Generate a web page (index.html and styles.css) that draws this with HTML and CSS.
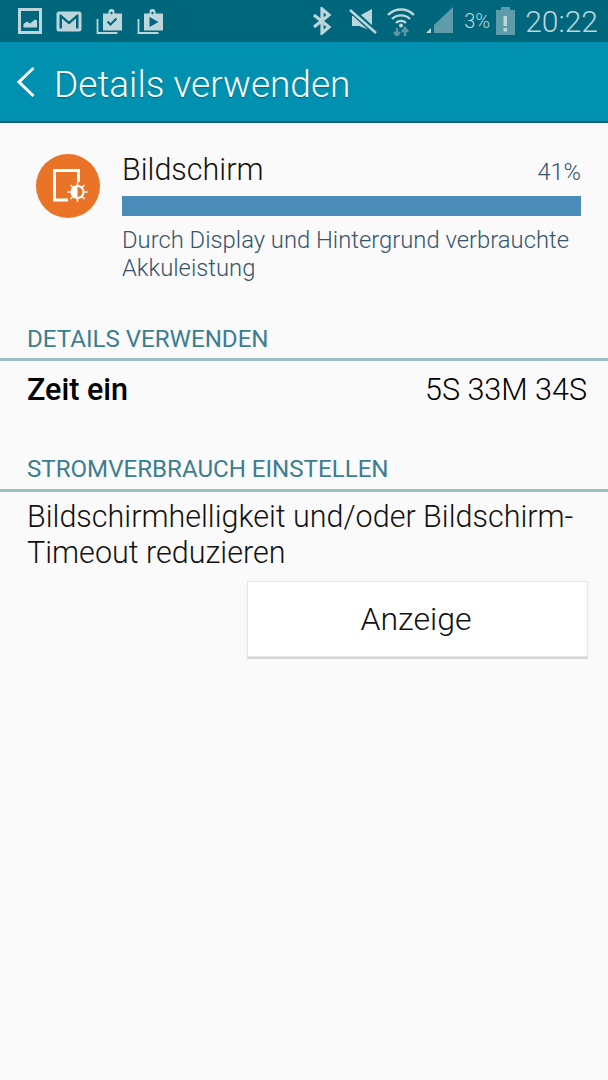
FILE: index.html
```html
<!DOCTYPE html>
<html lang="de">
<head>
<meta charset="utf-8">
<title>Details verwenden</title>
<link rel="stylesheet" href="styles.css">
</head>
<body>
<div class="statusbar">
  <div class="notif">
    <svg class="ic" width="24" height="26" viewBox="0 0 24 26"><rect x="0" y="0" width="24" height="26" fill="#bcd6dc"/><rect x="3" y="3" width="18" height="20" fill="#00667c"/><path d="M5.500 19.500V16L9 13.500l3 2 5-4 2 .8v7.200z" fill="#bcd6dc"/></svg>
    <svg class="ic" width="26" height="21" viewBox="0 0 26 21"><rect x="0.500" y="0.500" width="25" height="20" rx="2.500" fill="#bcd6dc"/><path d="M3.500 17.500V3.500h1.500L13 10.500 21 3.500h1.500v14h-2.500V7.500L13 13.500 6 7.500v10z" fill="#00667c"/></svg>
    <svg class="ic" width="27" height="25" viewBox="0 0 27 25"><path d="M7 4.500h5.500V3a3 3 0 0 1 6 0v1.500H26v17H7z" fill="#bcd6dc"/><path d="M1.500 10v14h20" fill="none" stroke="#bcd6dc" stroke-width="1.800"/><circle cx="15.500" cy="4" r="1.200" fill="#00667c"/><path d="M11.500 12.500l3 3 6-6" fill="none" stroke="#00667c" stroke-width="2"/></svg>
    <svg class="ic" width="27" height="25" viewBox="0 0 27 25"><path d="M7 4.500h5.500V3a3 3 0 0 1 6 0v1.500H26v17H7z" fill="#bcd6dc"/><path d="M1.500 10v14h20" fill="none" stroke="#bcd6dc" stroke-width="1.800"/><circle cx="15.500" cy="4" r="1.200" fill="#00667c"/><path d="M12.500 8l9 5-9 5z" fill="#00667c"/></svg>
  </div>
  <div class="sys">
    <svg class="bt" width="20" height="28" viewBox="0 0 20 28"><path d="M2 8l15 12-7 6V2l7 6L2 20" fill="none" stroke="#bcd6dc" stroke-width="3.200"/></svg>
    <svg class="mute" width="28" height="26" viewBox="0 0 28 26"><path d="M3 8h7L23 1v22L10 18H3z" fill="#bcd6dc"/><path d="M1 1l26 24" stroke="#00667c" stroke-width="6"/><path d="M1 2l26 23" stroke="#bcd6dc" stroke-width="2.500"/></svg>
    <svg class="wifi" width="30" height="30" viewBox="0 0 30 30"><path d="M2 9a18 18 0 0 1 26 0M6 13a13 13 0 0 1 18 0M10 17a7 7 0 0 1 10 0" fill="none" stroke="#bcd6dc" stroke-width="2.400"/><circle cx="15" cy="19.500" r="2" fill="#bcd6dc"/><path d="M11 22v8M8 26l3 4 3-4M19 30v-8M16 26l3-4 3 4" fill="none" stroke="#5f95a3" stroke-width="2.400"/></svg>
    <svg class="signal" width="28" height="28" viewBox="0 0 28 28"><path d="M8 26V18L27 0v26z" fill="#5f9caa"/><path d="M0 26l5-5v5z" fill="#bcd6dc"/></svg>
    <span class="pct">3%</span>
    <svg class="batt" width="19" height="28" viewBox="0 0 19 28"><path d="M5 0h9v3h5v25H0V3h5z" fill="#5f9caa"/><rect x="7.500" y="9" width="3.500" height="10" fill="#bcd6dc"/><rect x="7.500" y="21" width="3.500" height="3.500" fill="#bcd6dc"/></svg>
    <span class="clock">20:22</span>
  </div>
</div>
<header class="appbar">
  <svg class="back" width="20" height="32" viewBox="0 0 20 32"><path d="M17.500 2L3 16l14.500 14" fill="none" stroke="#fff" stroke-width="3"/></svg>
  <h1 class="title">Details verwenden</h1>
</header>
<main class="content">
  <section class="usage">
    <div class="badge">
      <svg width="64" height="64" viewBox="0 0 64 64"><path d="M32 46H18.500V16.500H42.500V28" fill="none" stroke="#fff" stroke-width="3"/><path d="M41.500 28v20M31.500 38h20M34.500 31l14 14M48.500 31l-14 14" stroke="#fff" stroke-width="1.500"/><circle cx="41.500" cy="38" r="7" fill="#fff"/><path d="M41.500 33a5 5 0 0 1 0 10z" fill="#e97428"/></svg>
    </div>
    <div class="usage-body">
      <div class="usage-head">
        <span class="usage-name">Bildschirm</span>
        <span class="usage-pct">41%</span>
      </div>
      <div class="bar"></div>
      <p class="usage-desc">Durch Display und Hintergrund verbrauchte Akkuleistung</p>
    </div>
  </section>
  <h2 class="sec sec-first">DETAILS VERWENDEN</h2>
  <div class="row">
    <span class="row-label">Zeit ein</span>
    <span class="row-value">5S 33M 34S</span>
  </div>
  <h2 class="sec sec-second">STROMVERBRAUCH EINSTELLEN</h2>
  <p class="tip">Bildschirmhelligkeit und/oder Bildschirm-Timeout reduzieren</p>
  <div class="actions"><button class="btn">Anzeige</button></div>
</main>
</body>
</html>
```
FILE: styles.css
```css
* { box-sizing: border-box; }
html, body { margin: 0; padding: 0; }
body {
  width: 608px;
  height: 1080px;
  overflow: hidden;
  background: #fafafa;
  font-family: Roboto, "Liberation Sans", sans-serif;
}
svg { display: block; flex: none; }
.statusbar {
  height: 42px;
  background: #00667c;
  display: flex;
  align-items: center;
  justify-content: space-between;
  padding: 0 10px 0 18px;
}
.notif { display: flex; align-items: center; gap: 14px; }
.sys { display: flex; align-items: center; }
.bt { margin-right: 17px; }
.mute { margin-right: 9px; }
.wifi { margin-right: 10px; }
.signal { margin-right: 10px; }
.pct { font-size: 20px; font-weight: 300; color: #bcd6dc; margin-right: 6px; }
.batt { margin-right: 10px; }
.clock { font-size: 30px; font-weight: 300; color: #bcd6dc; }
.appbar {
  height: 81px;
  background: #0091b0;
  border-bottom: 2px solid #0b5f72;
  display: flex;
  align-items: center;
  padding-left: 16px;
  gap: 18px;
}
.title {
  margin: 0;
  padding-top: 5px;
  font-size: 37px;
  font-weight: 300;
  color: #fff;
  text-shadow: 0 1px 1px rgba(0,60,80,.5);
}
.usage { display: flex; padding: 31px 27px 0 36px; }
.badge {
  width: 64px;
  height: 64px;
  border-radius: 50%;
  background: #e97428;
  flex: none;
  margin-right: 22px;
}
.usage-body { flex: 1; }
.usage-head {
  display: flex;
  justify-content: space-between;
  align-items: baseline;
  height: 42px;
}
.usage-name { font-size: 30.500px; font-weight: 300; color: #111; line-height: 32px; }
.usage-pct { font-size: 23.500px; font-weight: 300; color: #35546b; }
.bar { height: 20px; background: #4a8db9; }
.usage-desc {
  margin: 10px -8px 0 0;
  font-size: 23.800px;
  line-height: 28px;
  font-weight: 300;
  color: #35546b;
}
.sec {
  margin: 0;
  padding: 0 0 5px 27px;
  border-bottom: 3px solid #9dbfc3;
  font-size: 24.100px;
  font-weight: 400;
  line-height: 28px;
  color: #3b7e90;
}
.sec-first { margin-top: 43px; }
.sec-second { margin-top: 29px; padding-bottom: 6px; }
.row {
  display: flex;
  justify-content: space-between;
  padding: 11px 21px 0 27px;
  height: 65px;
  font-size: 30.500px;
  color: #000;
  line-height: 36px;
}
.row-label { font-weight: 500; }
.row-value { font-weight: 300; }
.tip {
  margin: 7px 20px 0 27px;
  font-size: 30.500px;
  font-weight: 300;
  line-height: 36px;
  color: #111;
}
.actions { display: flex; justify-content: flex-end; padding: 10px 20px 0 0; }
.btn {
  width: 341px;
  height: 76px;
  background: #fff;
  border: 1px solid #e6e6e6;
  box-shadow: 0 2px 1px #d5d9d9;
  font-family: inherit;
  font-size: 32px;
  font-weight: 300;
  color: #111;
  padding: 0 3px 0 0;
}
```
